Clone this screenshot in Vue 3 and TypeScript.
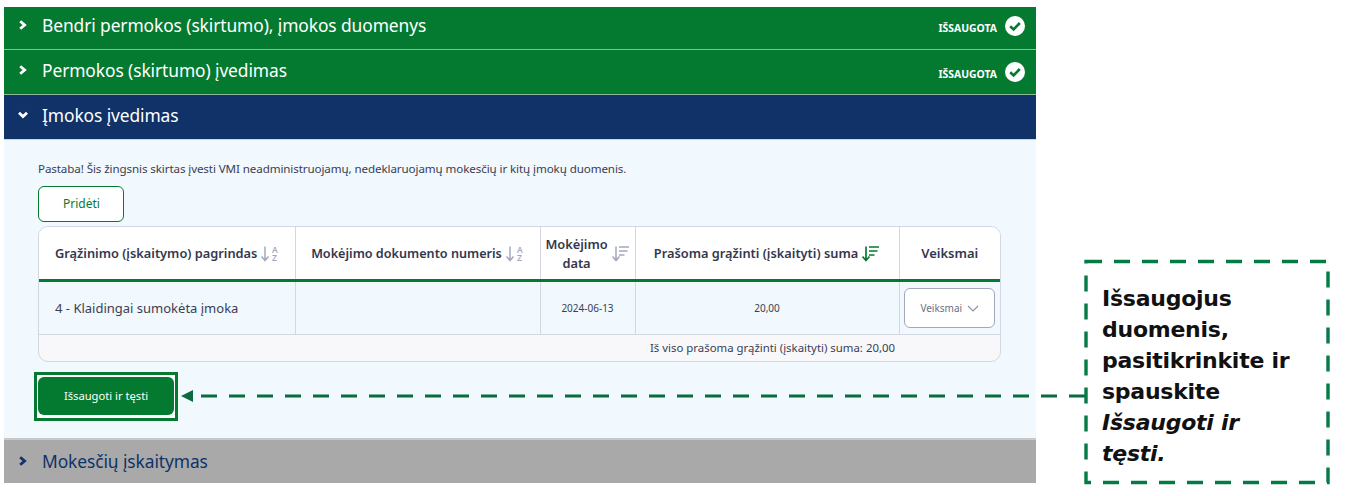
<script setup lang="ts">
interface Section { title: string; saved: boolean }
const saved: Section[] = [
  { title: 'Bendri permokos (skirtumo), įmokos duomenys', saved: true },
  { title: 'Permokos (skirtumo) įvedimas', saved: true },
]
</script>

<template>
  <div class="page">
    <div class="accordion">
      <div v-for="s in saved" :key="s.title" class="head green">
        <svg class="chev" width="10" height="10" viewBox="0 0 10 10"><path d="M2.2 1.3 6.6 5 2.2 8.7" fill="none" stroke="currentColor" stroke-width="2.8"/></svg>
        <span class="title">{{ s.title }}</span>
        <span class="status">IŠSAUGOTA</span>
        <svg class="ok" width="20" height="20" viewBox="0 0 20 20"><circle cx="10" cy="10" r="10" fill="#fff"/><path d="M5.2 10.2 8.6 13.4 14.8 7" fill="none" stroke="#047a30" stroke-width="2.6"/></svg>
      </div>
      <div class="head navy">
        <svg class="chev" width="10" height="10" viewBox="0 0 10 10"><path d="M1 2.8 5 6.6 9 2.8" fill="none" stroke="currentColor" stroke-width="2.8"/></svg>
        <span class="title">Įmokos įvedimas</span>
      </div>
      <div class="panel">
        <p class="note">Pastaba! Šis žingsnis skirtas įvesti VMI neadministruojamų, nedeklaruojamų mokesčių ir kitų įmokų duomenis.</p>
        <button class="add">Pridėti</button>
        <div class="table-wrap">
          <table>
            <colgroup>
              <col style="width:256px" /><col style="width:245px" /><col style="width:95px" /><col style="width:264px" /><col />
            </colgroup>
            <thead>
              <tr>
                <th class="left">
                  <span class="th">Grąžinimo (įskaitymo) pagrindas
                    <svg class="sort" width="18" height="18" viewBox="0 0 18 18"><path d="M4 2.5V16.5M.5 12.5 4 16.5 7.5 12.5" fill="none" stroke="#a3a8bd" stroke-width="1.5"/><text x="11" y="8.5" class="az">A</text><text x="11" y="17" class="az">Z</text></svg>
                  </span>
                </th>
                <th class="doc">
                  <span class="th">Mokėjimo dokumento numeris
                    <svg class="sort" width="18" height="18" viewBox="0 0 18 18"><path d="M4 2.5V16.5M.5 12.5 4 16.5 7.5 12.5" fill="none" stroke="#a3a8bd" stroke-width="1.5"/><text x="11" y="8.5" class="az">A</text><text x="11" y="17" class="az">Z</text></svg>
                  </span>
                </th>
                <th>
                  <span class="th"><span class="two">Mokėjimo<br />data</span>
                    <svg class="sort" width="18" height="18" viewBox="0 0 18 18"><path d="M4 2.5V16.5M.5 12.5 4 16.5 7.5 12.5M7 3H17M7 7H15.5M7 11H12.5" fill="none" stroke="#a3a8bd" stroke-width="1.5"/></svg>
                  </span>
                </th>
                <th>
                  <span class="th">Prašoma grąžinti (įskaityti) suma
                    <svg class="sort" width="18" height="18" viewBox="0 0 18 18"><path d="M4 2.5V16.5M.5 12.5 4 16.5 7.5 12.5M7 3H17M7 7H15.5M7 11H12.5" fill="none" stroke="#047a30" stroke-width="1.7"/></svg>
                  </span>
                </th>
                <th class="plain">Veiksmai</th>
              </tr>
            </thead>
            <tbody>
              <tr>
                <td class="left base">4 - Klaidingai sumokėta įmoka</td>
                <td></td>
                <td class="small">2024-06-13</td>
                <td class="small">20,00</td>
                <td class="act">
                  <span class="menu">Veiksmai
                    <svg width="12" height="7" viewBox="0 0 12 7"><path d="M1 1 6 6 11 1" fill="none" stroke="#8b90a8" stroke-width="1.1"/></svg>
                  </span>
                </td>
              </tr>
            </tbody>
          </table>
          <div class="total">Iš viso prašoma grąžinti (įskaityti) suma: 20,00</div>
        </div>
        <div class="save-ring"><button class="save">Išsaugoti ir tęsti</button></div>
      </div>
      <div class="head gray">
        <svg class="chev" width="10" height="10" viewBox="0 0 10 10"><path d="M2.2 1.3 6.6 5 2.2 8.7" fill="none" stroke="currentColor" stroke-width="2.8"/></svg>
        <span class="title">Mokesčių įskaitymas</span>
      </div>
    </div>

    <svg class="arrow" width="906" height="16" viewBox="0 0 906 16">
      <path d="M0 8 12 2V14Z" fill="#0b6b3e"/>
      <path d="M20 8H905" stroke="#0b6b3e" stroke-width="3" stroke-dasharray="16 12" fill="none"/>
    </svg>
    <div class="callout">
      <svg class="dash" width="248" height="226" viewBox="0 0 248 226">
        <rect x="3" y="2.5" width="242" height="221" fill="none" stroke="#047a45" stroke-width="3.4" stroke-dasharray="16 12"/>
      </svg>
      <p>Išsaugojus duomenis, pasitikrinkite ir spauskite <em>Išsaugoti ir tęsti.</em></p>
    </div>
  </div>
</template>

<style>
html, body { margin: 0; background: #fff; }
</style>

<style scoped>
.page { position: relative; width: 1356px; height: 496px; overflow: hidden; padding: 7px 0 0 4px; box-sizing: border-box; font-family: "Noto Sans", sans-serif; color: #33374d; }
.accordion { width: 1032px; }
.head { display: flex; align-items: center; height: 44px; padding: 0 0 0 14px; box-sizing: border-box; color: #fff; }
.green { background: #047a30; border-bottom: 1px solid #8fb79d; height: 43px; padding-bottom: 6px; }
.green + .green { height: 45px; padding-bottom: 4px; }
.navy { background: #103268; height: 44px; padding-bottom: 4px; }
.gray { background: #a9a9a9; color: #103268; height: 45px; border-top: 2px solid #c9c9c9; padding-bottom: 2px; }
.chev { flex: none; }
.title { margin-left: 14px; font-size: 17.4px; letter-spacing: -0.1px; flex: 1; }
.status { font-size: 10.4px; font-weight: 700; margin-right: 8px; margin-top: 6px; }
.green + .green .status { margin-top: 8px; }
.ok { margin-right: 11px; flex: none; margin-top: 2px; }
.green + .green .ok { margin-top: 3px; }
.panel { background: #f1f8fe; height: 299px; box-sizing: border-box; padding: 22px 35px 0 34px; border-top: 1px solid #d0d6e0; }
.note { margin: 0; font-size: 11.6px; line-height: 14px; color: #3a3e52; letter-spacing: -0.1px; }
.add { display: block; margin-top: 10px; width: 86px; height: 36px; background: #fff; border: 1px solid #047a30; border-radius: 6px; color: #047a30; font: 12px "Noto Sans", sans-serif; padding: 0 0 2px 1px; }
.table-wrap { margin-top: 4px; border: 1px solid #d3d7e2; border-radius: 10px; overflow: hidden; background: #f8f8fb; }
table { width: 100%; border-collapse: collapse; table-layout: fixed; }
th { height: 52px; background: #fff; border-right: 1px solid #d3d7e2; border-bottom: 3px solid #047a30; padding: 0; font-size: 12.8px; font-weight: 600; color: #33374d; text-align: center; box-sizing: content-box; }
th.plain { font-size: 13px; }
th.doc { font-size: 12.65px; }
th:last-child, td:last-child { border-right: 0; }
th.left { text-align: left; padding-left: 16px; }
.th { display: inline-flex; align-items: center; gap: 4px; white-space: nowrap; line-height: 19px; }
.two { text-align: center; margin-top: 2px; }
.sort { flex: none; }
.az { font-size: 8.5px; font-weight: 600; fill: #a3a8bd; font-family: "Noto Sans", sans-serif; }
td { height: 54px; background: #f1f8fe; border-right: 1px solid #d3d7e2; border-bottom: 1px solid #d3d7e2; text-align: center; padding: 0; box-sizing: border-box; }
td.left { text-align: left; padding-left: 16px; padding-bottom: 1px; }
.base { font-size: 13px; color: #3a3e52; }
.small { font-size: 10px; color: #3a3e52; }
.menu { display: inline-flex; width: 91px; height: 40px; box-sizing: border-box; align-items: center; justify-content: center; gap: 5px; background: #fff; border: 1px solid #a3a8bd; border-radius: 6px; font-size: 10px; color: #6c7085; }
.total { height: 26px; line-height: 26px; font-size: 11.4px; padding-left: 611px; color: #3a3e52; white-space: nowrap; }
.save-ring { margin-top: 10px; margin-left: -4px; width: 144px; height: 49px; border: 3px solid #047a30; background: #fff; padding: 2px 1px; box-sizing: border-box; }
.save { display: block; width: 136px; height: 38px; background: #047a30; border: 0; border-radius: 6px; color: #fff; font: 11.2px "Noto Sans", sans-serif; padding: 0 0 2px; }
.arrow { position: absolute; left: 181px; top: 388px; }
.callout { position: absolute; left: 1083px; top: 259px; width: 248px; height: 226px; box-sizing: border-box; padding: 24px 22px 0 19px; }
.dash { position: absolute; left: 0; top: 0; }
.callout p { margin: 0; font-family: "DejaVu Sans", sans-serif; font-size: 22px; line-height: 31px; font-weight: 700; color: #111; letter-spacing: -0.25px; }
.callout em { font-style: italic; }
</style>
